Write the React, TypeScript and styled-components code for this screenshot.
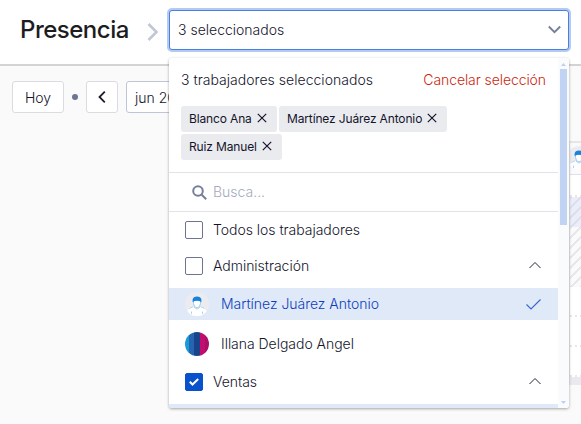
import React from "react";
import styled, { createGlobalStyle } from "styled-components";

const GlobalStyle = createGlobalStyle`
  * { box-sizing: border-box; }
  body {
    margin: 0;
    background: #fafafa;
    color: #14142b;
    font-family: Inter, "Liberation Sans", sans-serif;
    font-size: 14px;
    font-weight: 300;
    overflow: hidden;
  }
`;

const Page = styled.div`
  width: 581px;
  height: 424px;
  overflow: hidden;
  display: flex;
  flex-direction: column;
`;

const Header = styled.header`
  height: 66px;
  flex: none;
  display: flex;
  align-items: flex-start;
  background: #fff;
  border-bottom: 2px solid #d3d3d6;
`;

const Title = styled.h1`
  width: 147px;
  margin: 0;
  padding: 15px 0 0 20px;
  font-size: 24px;
  line-height: 30px;
  font-weight: 500;
  letter-spacing: -0.5px;
  color: #1d1d1f;
`;

const Crumb = styled.svg`
  flex: none;
  width: 12px;
  height: 18px;
  margin: 23px 10px 0 0;
`;

const Select = styled.div`
  position: relative;
  width: 400px;
  flex: none;
  margin-top: 10px;
`;

const Trigger = styled.div`
  height: 40px;
  display: flex;
  align-items: center;
  justify-content: space-between;
  padding: 0 7px 1px 8px;
  border: 1px solid #4a80dc;
  border-radius: 3px;
  background: #fff;
  box-shadow: 0 0 0 2px #b3cbf2;
`;

const Menu = styled.div`
  position: absolute;
  z-index: 2;
  top: 48px;
  left: 0;
  width: 400px;
  height: 350px;
  display: flex;
  overflow: hidden;
  background: #fff;
  border-radius: 3px;
  box-shadow: 0 1px 3px rgba(0, 0, 0, 0.35);
`;

const MenuBody = styled.div`
  width: 389px;
  height: 350px;
  overflow: hidden;
`;

const Scrollbar = styled.div`
  width: 11px;
  display: flex;
  flex-direction: column;
  align-items: center;
  background: #fafbfd;
  padding: 5px 0 4px;
`;

const Thumb = styled.div`
  width: 7px;
  height: 156px;
  margin: 3px 0 auto;
  background: #c1d3f3;
`;

const Summary = styled.div`
  display: flex;
  justify-content: space-between;
  height: 48px;
  padding: 12px 12px 0;
  line-height: 20px;
  letter-spacing: 0.03px;
`;

const Cancel = styled.span`
  color: #cb1f10;
  letter-spacing: -0.08px;
`;

const Chips = styled.div`
  display: flex;
  flex-wrap: wrap;
  align-content: flex-start;
  gap: 2px;
  height: 66px;
  padding: 0 12px;
`;

const Chip = styled.div<{ $width: number }>`
  width: ${(p) => p.$width}px;
  height: 26px;
  display: flex;
  align-items: center;
  justify-content: space-between;
  padding: 0 10px 1px 8px;
  border-radius: 3px;
  background: #eaebef;
  font-size: 12px;
  font-weight: 400;
  letter-spacing: -0.14px;
  white-space: nowrap;
  svg { margin-top: -2px; }
`;

const Search = styled.div`
  height: 40px;
  display: flex;
  align-items: center;
  gap: 6px;
  padding: 0 0 1px 23px;
  border: 1px solid #e2e3e8;
  border-width: 1px 0;
  color: #a4aabd;
  svg { margin-top: 1px; }
`;

const Row = styled.div<{ $group?: boolean; $selected?: boolean }>`
  height: ${(p) => (p.$group ? 36 : 32)}px;
  display: flex;
  align-items: center;
  gap: ${(p) => (p.$group ? 10 : 12)}px;
  padding: 0 17px 0 16px;
  background: ${(p) => (p.$selected ? "#e0e9f8" : "transparent")};
  color: ${(p) => (p.$selected ? "#0b3fc0" : "inherit")};
  > svg:last-child { margin-left: auto; }
`;

const Label = styled.span<{ $raised?: boolean }>`
  padding-bottom: ${(p) => (p.$raised ? 2 : 1)}px;
  letter-spacing: -0.03px;
`;

const Group = styled.div`
  display: flex;
  flex-direction: column;
  gap: 8px;
  padding: 4px 0;
`;

const Checkbox = styled.span<{ $checked?: boolean }>`
  width: 18px;
  height: 18px;
  margin-top: -1px;
  display: flex;
  align-items: center;
  justify-content: center;
  border: 1px solid ${(p) => (p.$checked ? "#0a51cc" : "#6b7590")};
  border-radius: 2px;
  background: ${(p) => (p.$checked ? "#0a51cc" : "#fff")};
`;

const Stripes = styled.span`
  width: 24px;
  height: 24px;
  border-radius: 50%;
  background: linear-gradient(90deg, #199bd7 0 4px, #2564b0 4px 9px, #194489 9px 15px, #c40c6e 15px 20px, #a91065 20px);
`;

const Main = styled.main`
  display: flex;
  justify-content: space-between;
`;

const Toolbar = styled.div`
  display: flex;
  align-items: center;
  height: 32px;
  margin: 15px 0 0 12px;
`;

const Button = styled.div<{ $width: number }>`
  width: ${(p) => p.$width}px;
  height: 32px;
  display: flex;
  align-items: center;
  justify-content: center;
  border: 1px solid #dcdce0;
  border-radius: 3px;
  background: #fff;
  white-space: nowrap;
`;

const Field = styled(Button)`
  margin-left: 8px;
  padding-left: 8px;
  justify-content: flex-start;
  border-color: #c0c5d5;
`;

const Dot = styled.span`
  width: 6px;
  height: 6px;
  margin: 0 8px;
  border-radius: 50%;
  background: #6b7693;
`;

const Calendar = styled.div`
  width: 13px;
  margin-top: 75px;
  border-top: 2px solid #e6e6ea;
  border-left: 2px solid #e9e9ed;
  background: #fff;
`;

const Person = styled.div`
  height: 32px;
  padding-top: 3px;
  overflow: hidden;
  background: #f9fafc;
  border-bottom: 1px solid #dfe1e8;
  svg { display: block; margin-left: -3px; }
`;

const Slot = styled.div<{ $height: number; $fill?: string; $line?: string }>`
  height: ${(p) => p.$height}px;
  background: ${(p) =>
    p.$fill
      ? `repeating-linear-gradient(135deg, ${p.$line} 0 2px, ${p.$fill} 2px 7px)`
      : "#fff"};
`;

const Dashes = styled.div`
  height: 2px;
  background: repeating-linear-gradient(90deg, #e7e7ec 0 2px, #fff 2px 5px);
`;

const Band = styled.div`
  height: 8px;
  margin-left: -2px;
  background: #e9e9ee;
`;

function Close() {
  return (
    <svg width="10" height="10" viewBox="0 0 10 10" fill="none" stroke="#14142b" strokeWidth="1.2">
      <path d="M.8.8l8.400 8.400M9.200.8L.8 9.200" />
    </svg>
  );
}

function Up() {
  return (
    <svg width="12" height="8" viewBox="0 0 12 8" fill="none" stroke="#25253a" strokeWidth="1">
      <path d="M.5 6L6 .5l5.500 5.500" />
    </svg>
  );
}

function Avatar() {
  return (
    <svg width="24" height="24" viewBox="0 0 24 24">
      <circle cx="12" cy="12" r="12" fill="#ececf0" />
      <path d="M2.500 19.500q1-4 6.500-5.500v-3h6v3q5.500 1.500 6.500 5.500A12 12 0 0 1 2.500 19.500z" fill="#fff" />
      <path d="M8.500 8h7v3.500q-.4 4-3.500 4.500-3.100-.5-3.500-4.500z" fill="#fff" stroke="#8cc4ee" strokeWidth=".9" />
      <path d="M9 15q3 4 6 0M4.500 16.500l4-2M15.500 14.500l4 2M6.500 19.500v2.500M17.500 19.500v2.500" fill="none" stroke="#a4cff0" strokeWidth=".9" />
      <path d="M7.600 10V7.500Q8.200 4.500 12 4.500t4.400 3V10Q12 7.500 7.600 10z" fill="#1683dc" />
    </svg>
  );
}

function ArrowTip({ down }: { down?: boolean }) {
  return (
    <svg width="5" height="3" viewBox="0 0 5 3" fill="#bdd0f1">
      <path d={down ? "M0 0h5L2.500 3z" : "M0 3h5L2.500 0z"} />
    </svg>
  );
}

export default function App() {
  return (
    <Page>
      <GlobalStyle />
      <Header>
        <Title>Presencia</Title>
        <Crumb viewBox="0 0 12 18" fill="none" stroke="#c2c7d4" strokeWidth="2.600">
          <path d="M1.500 1l8 8-8 8" />
        </Crumb>
        <Select>
          <Trigger>
            <span>3 seleccionados</span>
            <svg width="13" height="9" viewBox="0 0 13 9" fill="none" stroke="#77809a" strokeWidth="1.900">
              <path d="M.8 1.500l5.700 5.700 5.700-5.700" />
            </svg>
          </Trigger>
          <Menu>
            <MenuBody>
              <Summary>
                <span>3 trabajadores seleccionados</span>
                <Cancel>Cancelar selección</Cancel>
              </Summary>
              <Chips>
                <Chip $width={96}>Blanco Ana<Close /></Chip>
                <Chip $width={168}>Martínez Juárez Antonio<Close /></Chip>
                <Chip $width={101}>Ruiz Manuel<Close /></Chip>
              </Chips>
              <Search>
                <svg width="15" height="15" viewBox="0 0 15 15" fill="none" stroke="#77809a" strokeWidth="2">
                  <circle cx="6" cy="6" r="4.800" />
                  <path d="M9.500 9.500l4.700 4.700" />
                </svg>
                <span>Busca...</span>
              </Search>
              <Row $group><Checkbox /><Label $raised>Todos los trabajadores</Label></Row>
              <Row $group><Checkbox /><Label $raised>Administración</Label><Up /></Row>
              <Group>
                <Row $selected>
                  <Avatar /><Label>Martínez Juárez Antonio</Label>
                  <svg width="15" height="11" viewBox="0 0 15 11" fill="none" stroke="#3c67d0" strokeWidth="1.200">
                    <path d="M.5 5.500L5 10l9.500-9.500" />
                  </svg>
                </Row>
                <Row><Stripes /><Label>Illana Delgado Angel</Label></Row>
              </Group>
              <Row $group>
                <Checkbox $checked>
                  <svg width="10" height="8" viewBox="0 0 10 8" fill="none" stroke="#fff" strokeWidth="2">
                    <path d="M.8 3.800l2.700 2.700L9.200 1" />
                  </svg>
                </Checkbox>
                <Label $raised>Ventas</Label><Up />
              </Row>
              <Group>
                <Row $selected><Avatar /></Row>
              </Group>
            </MenuBody>
            <Scrollbar>
              <ArrowTip />
              <Thumb />
              <ArrowTip down />
            </Scrollbar>
          </Menu>
        </Select>
      </Header>
      <Main>
        <Toolbar>
          <Button $width={52}>Hoy</Button>
          <Dot />
          <Button $width={32}>
            <svg width="8" height="12" viewBox="0 0 8 12" fill="none" stroke="#1d1d2c" strokeWidth="1.800">
              <path d="M6.800.7L1.500 6l5.300 5.300" />
            </svg>
          </Button>
          <Field $width={100}>jun 2023</Field>
        </Toolbar>
        <Calendar>
          <Person><Avatar /></Person>
          <Slot $height={20} />
          <Dashes />
          <Slot $height={30} $fill="#e9eefa" $line="#dde0ea" />
          <Slot $height={60} $fill="#fafafa" $line="#e8e8ec" />
          <Slot $height={28} />
          <Dashes />
          <Slot $height={28} />
          <Dashes />
          <Slot $height={28} />
          <Dashes />
          <Band />
        </Calendar>
      </Main>
    </Page>
  );
}
